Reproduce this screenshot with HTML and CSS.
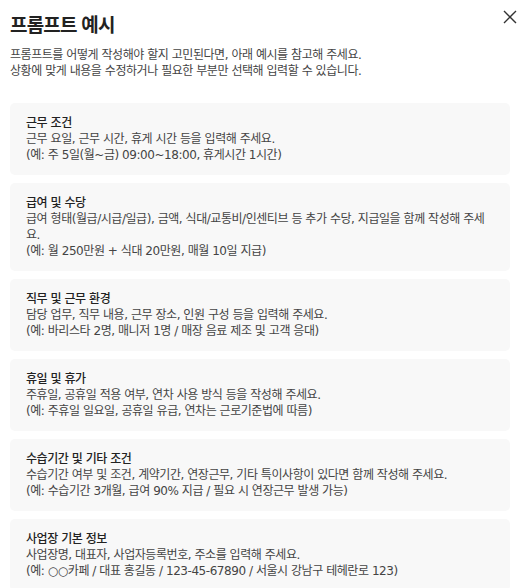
FILE: index.html
```html
<!DOCTYPE html>
<html lang="ko">
<head>
<meta charset="utf-8">
<link rel="stylesheet" href="styles.css">
</head>
<body>
<div class="modal">
  <h1 class="title">프롬프트 예시</h1>
  <button class="close" aria-label="닫기">
    <svg width="14" height="14" viewBox="0 0 14 14"><path d="M1 1L13 13M13 1L1 13" stroke="#333" stroke-width="1.4" fill="none"/></svg>
  </button>
  <p class="intro">프롬프트를 어떻게 작성해야 할지 고민된다면, 아래 예시를 참고해 주세요.<br>상황에 맞게 내용을 수정하거나 필요한 부분만 선택해 입력할 수 있습니다.</p>
  <div class="list">
    <div class="card">
      <div class="card-title">근무 조건</div>
      <div class="card-text">근무 요일, 근무 시간, 휴게 시간 등을 입력해 주세요.</div>
      <div class="card-text">(예: 주 5일(월~금) 09:00~18:00, 휴게시간 1시간)</div>
    </div>
    <div class="card">
      <div class="card-title">급여 및 수당</div>
      <div class="card-text">급여 형태(월급/시급/일급), 금액, 식대/교통비/인센티브 등 추가 수당, 지급일을 함께 작성해 주세요.</div>
      <div class="card-text">(예: 월 250만원 + 식대 20만원, 매월 10일 지급)</div>
    </div>
    <div class="card">
      <div class="card-title">직무 및 근무 환경</div>
      <div class="card-text">담당 업무, 직무 내용, 근무 장소, 인원 구성 등을 입력해 주세요.</div>
      <div class="card-text">(예: 바리스타 2명, 매니저 1명 / 매장 음료 제조 및 고객 응대)</div>
    </div>
    <div class="card">
      <div class="card-title">휴일 및 휴가</div>
      <div class="card-text">주휴일, 공휴일 적용 여부, 연차 사용 방식 등을 작성해 주세요.</div>
      <div class="card-text">(예: 주휴일 일요일, 공휴일 유급, 연차는 근로기준법에 따름)</div>
    </div>
    <div class="card">
      <div class="card-title">수습기간 및 기타 조건</div>
      <div class="card-text">수습기간 여부 및 조건, 계약기간, 연장근무, 기타 특이사항이 있다면 함께 작성해 주세요.</div>
      <div class="card-text">(예: 수습기간 3개월, 급여 90% 지급 / 필요 시 연장근무 발생 가능)</div>
    </div>
    <div class="card">
      <div class="card-title">사업장 기본 정보</div>
      <div class="card-text">사업장명, 대표자, 사업자등록번호, 주소를 입력해 주세요.</div>
      <div class="card-text">(예: ○○카페 / 대표 홍길동 / 123-45-67890 / 서울시 강남구 테헤란로 123)</div>
    </div>
  </div>
</div>
</body>
</html>
```
FILE: styles.css
```css
html, body {
  margin: 0;
  padding: 0;
  background: #ffffff;
}
body {
  font-family: "DejaVu Sans", "Noto Sans CJK KR", sans-serif;
  color: #333333;
}
.modal {
  position: relative;
  padding: 10px 9px 0 10px;
}
.title {
  margin: 0;
  font-family: "Noto Sans CJK KR", sans-serif;
  font-size: 19px;
  line-height: 28px;
  font-weight: 700;
  letter-spacing: -0.8px;
  color: #222222;
}
.close {
  position: absolute;
  top: 10px;
  right: 2px;
  border: 0;
  background: none;
  padding: 0;
  width: 14px;
  height: 14px;
  cursor: pointer;
}
.close svg {
  display: block;
}
.intro {
  margin: 9px 0 0 0;
  font-size: 12px;
  line-height: 16px;
  letter-spacing: -0.45px;
  color: #444444;
}
.list {
  margin-top: 24px;
  display: flex;
  flex-direction: column;
  gap: 8px;
}
.card {
  background: #f8f8f8;
  border-radius: 5px;
  padding: 12px 16px;
  font-size: 12px;
  line-height: 16px;
  letter-spacing: -0.45px;
}
.card-title {
  color: #222222;
  font-weight: 500;
}
.card-text {
  color: #444444;
}
```
